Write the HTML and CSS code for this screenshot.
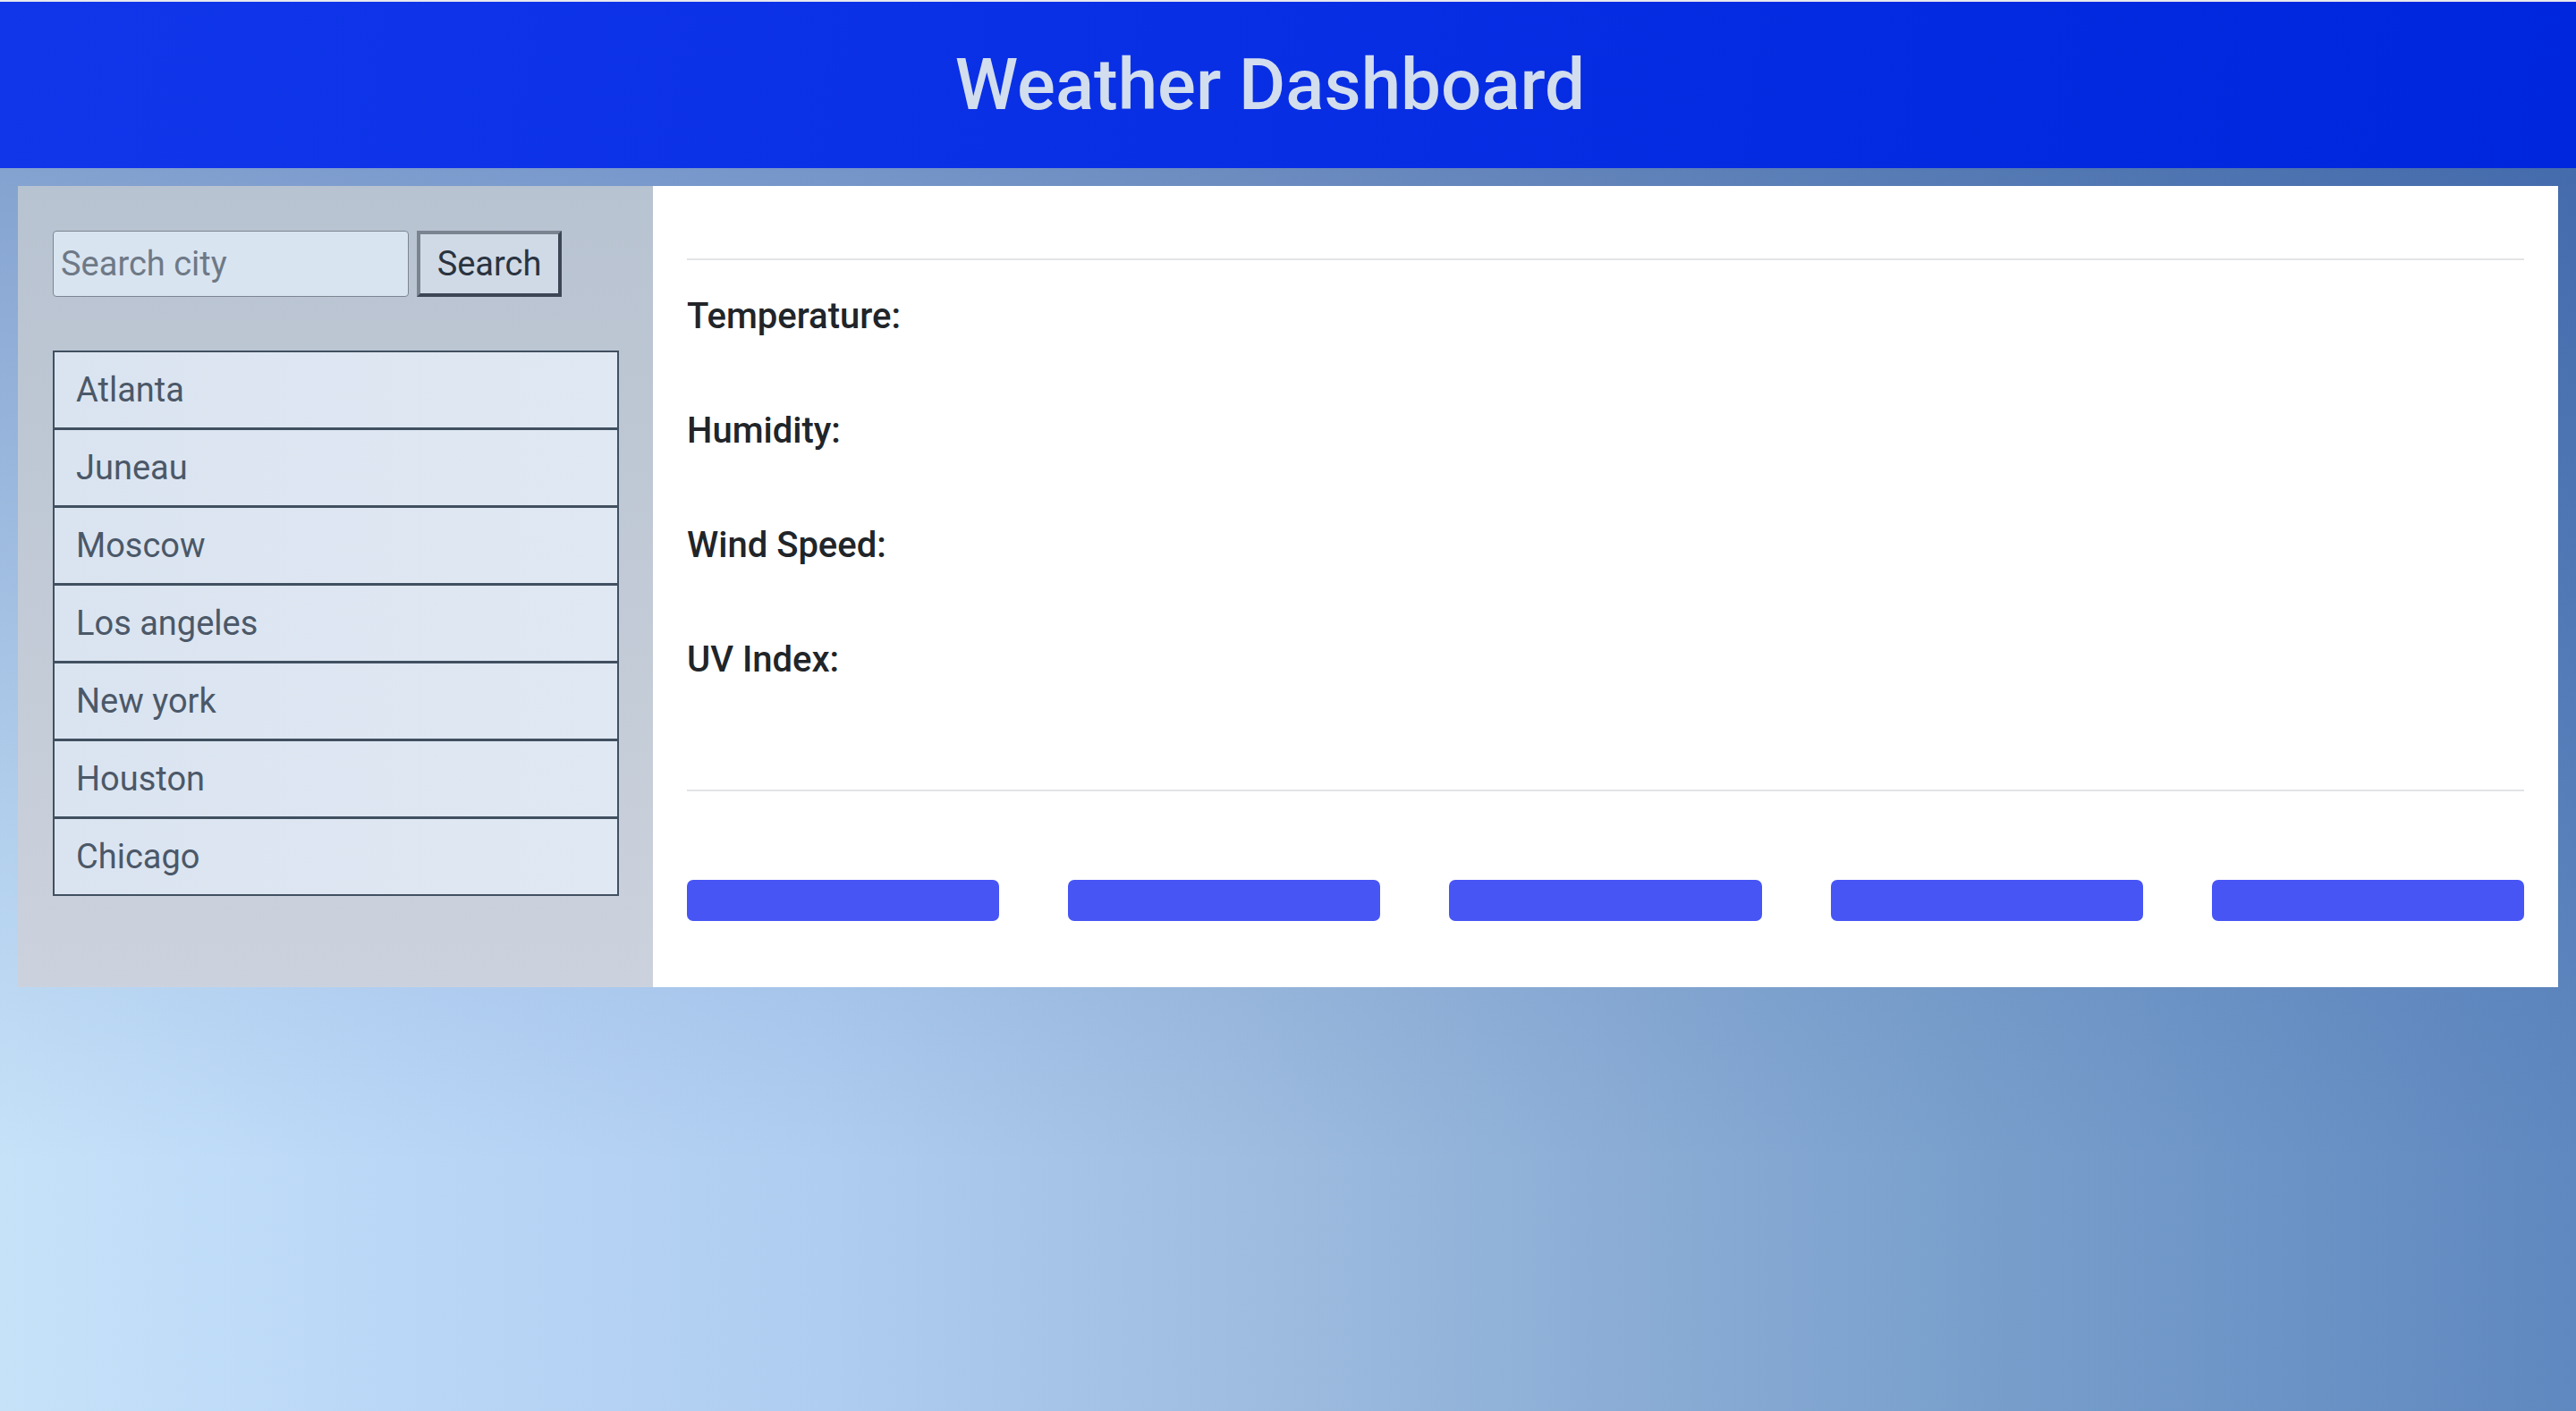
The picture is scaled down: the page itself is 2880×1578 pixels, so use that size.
FILE: index.html
```html
<!DOCTYPE html>
<html lang="en">
<head>
<meta charset="utf-8">
<title>Weather Dashboard</title>
<link rel="stylesheet" href="styles.css">
</head>
<body>
<header class="site-header">
  <h1 class="site-title">Weather Dashboard</h1>
</header>
<main class="main">
  <aside class="sidebar">
    <form class="search-form">
      <input class="search-input" type="text" placeholder="Search city">
      <button class="search-btn" type="button">Search</button>
    </form>
    <ul class="city-list">
      <li class="city-item">Atlanta</li>
      <li class="city-item">Juneau</li>
      <li class="city-item">Moscow</li>
      <li class="city-item">Los angeles</li>
      <li class="city-item">New york</li>
      <li class="city-item">Houston</li>
      <li class="city-item">Chicago</li>
    </ul>
  </aside>
  <section class="content">
    <h2 class="city-title"></h2>
    <hr class="divider">
    <div class="stats">
      <h5 class="stat">Temperature:</h5>
      <h5 class="stat">Humidity:</h5>
      <h5 class="stat">Wind Speed:</h5>
      <h5 class="stat">UV Index:</h5>
    </div>
    <hr class="divider divider-lower">
    <div class="forecast">
      <div class="forecast-card"></div>
      <div class="forecast-card"></div>
      <div class="forecast-card"></div>
      <div class="forecast-card"></div>
      <div class="forecast-card"></div>
    </div>
  </section>
</main>
</body>
</html>
```

FILE: styles.css
```css
html, body {
  margin: 0;
  padding: 0;
}
body {
  min-height: 1578px;
  font-family: Roboto, "Liberation Sans", Arial, sans-serif;
  color: #212529;
  background:
    linear-gradient(180deg, rgba(25, 60, 140, 0.45) 0px, rgba(25, 60, 140, 0.12) 900px, rgba(25, 60, 140, 0) 1300px),
    linear-gradient(90deg, #c6e2f9 0%, #bad7f7 15%, #afcdf0 32%, #9fbde0 48%, #8caed6 62%, #779ecb 78%, #5f88c0 100%);
}
.site-header {
  height: 186px;
  border-top: 2px solid #e8e8ee;
  background: linear-gradient(100deg, #1136ea 0%, #0a30e6 40%, #0026dd 100%);
  display: flex;
  align-items: center;
  justify-content: center;
  padding-right: 40px;
}
.site-title {
  margin: 0;
  font-size: 80px;
  font-weight: 500;
  color: #d2ddee;
  line-height: 1.2;
}
.main {
  display: flex;
  padding: 20px 20px 0 20px;
}
.sidebar {
  width: 710px;
  box-sizing: border-box;
  padding: 50px 37px 0 39px;
  background: linear-gradient(180deg, #b8c3d1 0%, #c1cad6 50%, #ccd2dd 100%);
}
.search-form {
  display: flex;
  gap: 9px;
  margin: 0;
}
.search-input {
  width: 398px;
  height: 74px;
  box-sizing: border-box;
  border: 1.5px solid #7c8591;
  border-radius: 4px;
  background: #d9e4f1;
  font-family: inherit;
  font-size: 38px;
  padding: 0 8px;
  color: #2a3340;
}
.search-input::placeholder {
  color: #6e7986;
}
.search-btn {
  width: 162px;
  height: 74px;
  box-sizing: border-box;
  border: 4px solid;
  border-color: #7a8390 #3c4654 #3c4654 #7a8390;
  background: #d0dae6;
  font-family: inherit;
  font-size: 38px;
  color: #2a3340;
  padding: 0;
}
.city-list {
  list-style: none;
  margin: 60px 0 0 0;
  padding: 0;
  width: 633px;
}
.city-item {
  border: 2px solid #415060;
  border-top-width: 1px;
  background: linear-gradient(90deg, #dae4f0, #e0e8f3);
  color: #4b5868;
  font-size: 38px;
  line-height: 44px;
  padding: 20px 24px;
}
.city-item:first-child {
  border-top-width: 2px;
}
.content {
  flex: 1;
  background: #ffffff;
  padding: 0 38px 74px 38px;
  display: flex;
  flex-direction: column;
}
.city-title {
  margin: 0 0 32px 0;
  min-height: 49px;
}
.divider {
  margin: 0;
  border: 0;
  border-top: 2px solid #e3e4e6;
  height: 0;
}
.stats {
  display: flex;
  flex-direction: column;
  gap: 80px;
  margin: 39px 0 121px 0;
}
.stat {
  margin: 0;
  font-size: 40px;
  font-weight: 500;
  line-height: 48px;
  color: #212529;
}
.forecast {
  display: flex;
  gap: 77px;
  margin-top: 99px;
}
.forecast-card {
  flex: 1;
  height: 46px;
  background: #4755f5;
  border-radius: 7px;
}
```
